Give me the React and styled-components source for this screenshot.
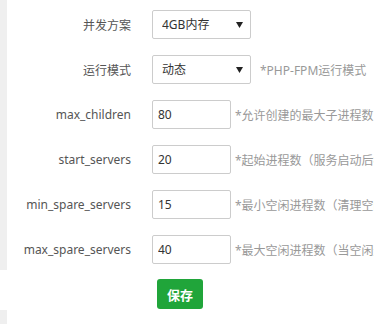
import React from "react";
import styled, { createGlobalStyle } from "styled-components";

const GlobalStyle = createGlobalStyle`
  html, body {
    margin: 0;
    padding: 0;
    background: #fff;
  }
  body {
    font-family: "Noto Sans", "Noto Sans CJK SC", sans-serif;
    font-size: 12px;
    color: #555;
  }
`;

const Page = styled.div`
  display: flex;
  width: 374px;
  height: 324px;
  overflow: hidden;
`;

const Sidebar = styled.div`
  width: 7px;
  flex-shrink: 0;
  display: flex;
  flex-direction: column;
  gap: 40px;
`;

const Strip = styled.div`
  background: #efefef;
  height: ${(p) => p.h || "auto"};
  flex: ${(p) => (p.h ? "none" : 1)};
`;

const Form = styled.div`
  display: flex;
  flex-direction: column;
  gap: 16px;
  padding-top: 10px;
  flex: 1;
  min-width: 0;
`;

const Row = styled.div`
  display: flex;
  align-items: center;
  height: 29px;
  white-space: nowrap;
`;

const Label = styled.label`
  width: 124px;
  flex-shrink: 0;
  text-align: right;
  margin-right: 21px;
  color: #555;
  font-size: 12px;
`;

const SelectWrap = styled.div`
  position: relative;
  width: 99px;
  height: 29px;
  flex-shrink: 0;
`;

const Select = styled.select`
  appearance: none;
  -webkit-appearance: none;
  box-sizing: border-box;
  width: 100%;
  height: 100%;
  border: 1px solid #ccc;
  border-radius: 2px;
  background: #fff;
  padding: 0 0 0 9px;
  font-family: inherit;
  font-size: 12px;
  color: #333;
  outline: none;
`;

const Arrow = styled.svg`
  position: absolute;
  right: 8px;
  top: 12px;
  pointer-events: none;
`;

const Input = styled.input`
  box-sizing: border-box;
  width: 79px;
  height: 29px;
  flex-shrink: 0;
  border: 1px solid #ccc;
  border-radius: 2px;
  padding: 0 5px;
  font-family: inherit;
  font-size: 12px;
  color: #333;
  outline: none;
`;

const Note = styled.span`
  margin-left: ${(p) => p.gap || 4}px;
  color: #999;
  font-size: 12px;
`;

const SaveButton = styled.button`
  align-self: flex-start;
  margin: -1px 0 0 150px;
  width: 46px;
  height: 30px;
  border: none;
  border-radius: 3px;
  background: #20a53a;
  color: #fff;
  font-family: inherit;
  font-size: 13px;
  font-weight: bold;
  padding: 0;
  cursor: pointer;
`;

const fields = [
  { name: "max_children", value: "80", note: "*允许创建的最大子进程数" },
  { name: "start_servers", value: "20", note: "*起始进程数（服务启动后初始进程数量）" },
  { name: "min_spare_servers", value: "15", note: "*最小空闲进程数（清理空闲进程后的保留数量）" },
  { name: "max_spare_servers", value: "40", note: "*最大空闲进程数（当空闲进程达到此值时清理）" },
];

function DropArrow() {
  return (
    <Arrow width="7" height="6" viewBox="0 0 7 6">
      <path d="M0 0 H7 L3.5 6 Z" fill="#222" />
    </Arrow>
  );
}

export default function App() {
  return (
    <>
      <GlobalStyle />
      <Page>
        <Sidebar>
          <Strip h="270px" />
          <Strip />
        </Sidebar>
        <Form>
          <Row>
            <Label>并发方案</Label>
            <SelectWrap>
              <Select defaultValue="4">
                <option value="1">1GB内存</option>
                <option value="2">2GB内存</option>
                <option value="4">4GB内存</option>
                <option value="8">8GB内存</option>
              </Select>
              <DropArrow />
            </SelectWrap>
          </Row>
          <Row>
            <Label>运行模式</Label>
            <SelectWrap>
              <Select defaultValue="dynamic">
                <option value="static">静态</option>
                <option value="dynamic">动态</option>
                <option value="ondemand">按需</option>
              </Select>
              <DropArrow />
            </SelectWrap>
            <Note gap={9}>*PHP-FPM运行模式</Note>
          </Row>
          {fields.map((f) => (
            <Row key={f.name}>
              <Label>{f.name}</Label>
              <Input defaultValue={f.value} />
              <Note>{f.note}</Note>
            </Row>
          ))}
          <SaveButton>保存</SaveButton>
        </Form>
      </Page>
    </>
  );
}
